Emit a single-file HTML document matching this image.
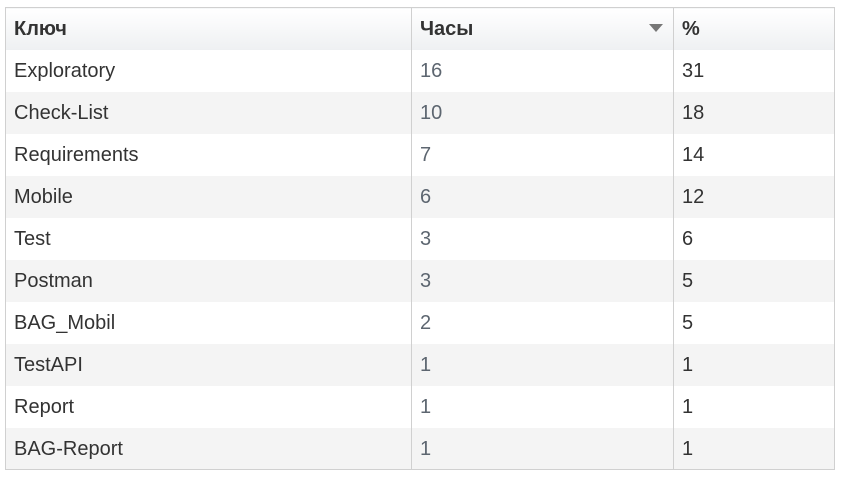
<!DOCTYPE html>
<html><head><meta charset="utf-8"><style>
body{margin:0;background:#fff;font-family:"Liberation Sans","DejaVu Sans",sans-serif;}
table{position:absolute;left:5px;top:7px;border-collapse:collapse;width:830px;font-size:20px;color:#333;border:1px solid #d0d0d0;}
td,th{height:42px;padding:2px 0 0 8px;box-sizing:border-box;text-align:left;border-left:1px solid #d0d0d0;border-right:1px solid #d0d0d0;}
th{font-weight:bold;background:linear-gradient(#fff,#eef0f2);color:#333;}
tr:nth-child(odd) td{background:#f4f4f4;}
td:nth-child(2){color:#5d6670;}
.c1{width:406px}.c2{width:262px}
.tri{position:absolute;right:10px;top:16px;width:0;height:0;border-left:7px solid transparent;border-right:7px solid transparent;border-top:8px solid #777;}
</style></head><body>
<table>
<tr><th class="c1">Ключ</th><th class="c2" style="position:relative">Часы<span class="tri"></span></th><th>%</th></tr>
<tr><td>Exploratory</td><td>16</td><td>31</td></tr>
<tr><td>Check-List</td><td>10</td><td>18</td></tr>
<tr><td>Requirements</td><td>7</td><td>14</td></tr>
<tr><td>Mobile</td><td>6</td><td>12</td></tr>
<tr><td>Test</td><td>3</td><td>6</td></tr>
<tr><td>Postman</td><td>3</td><td>5</td></tr>
<tr><td>BAG_Mobil</td><td>2</td><td>5</td></tr>
<tr><td>TestAPI</td><td>1</td><td>1</td></tr>
<tr><td>Report</td><td>1</td><td>1</td></tr>
<tr><td>BAG-Report</td><td>1</td><td>1</td></tr>
</table>
</body></html>
